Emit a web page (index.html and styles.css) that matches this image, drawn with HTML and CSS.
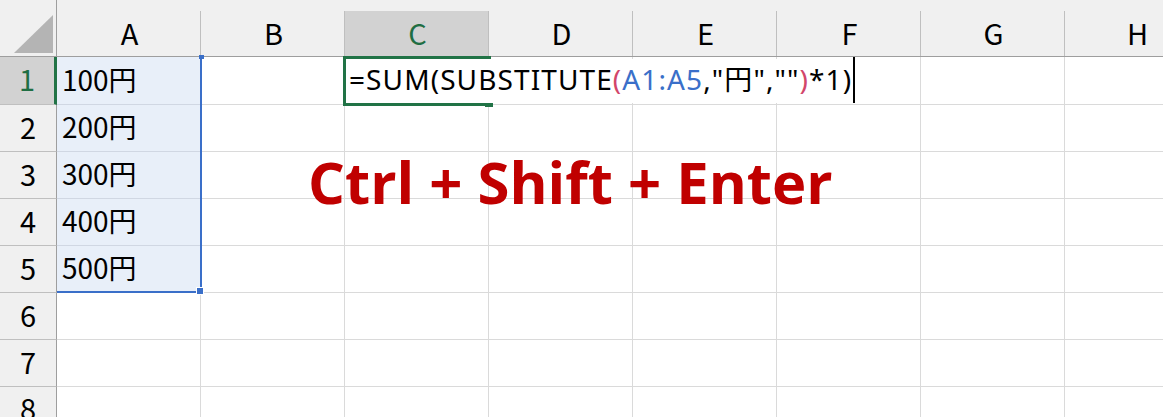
FILE: index.html
```html
<!DOCTYPE html>
<html lang="ja">
<head>
<meta charset="utf-8">
<link rel="stylesheet" href="styles.css">
</head>
<body>
<div class="sheet">
  <div class="row head">
    <div class="corner"><div class="tri"></div></div>
    <div class="ch">A</div>
    <div class="ch">B</div>
    <div class="ch active">C</div>
    <div class="ch">D</div>
    <div class="ch">E</div>
    <div class="ch">F</div>
    <div class="ch">G</div>
    <div class="ch">H</div>
  </div>
  <div class="row first">
    <div class="rh active">1</div>
    <div class="c sel">100円</div><div class="c"></div><div class="c"></div><div class="c"></div><div class="c"></div><div class="c"></div><div class="c"></div><div class="c"></div>
  </div>
  <div class="row">
    <div class="rh">2</div>
    <div class="c sel">200円</div><div class="c"></div><div class="c"></div><div class="c"></div><div class="c"></div><div class="c"></div><div class="c"></div><div class="c"></div>
  </div>
  <div class="row">
    <div class="rh">3</div>
    <div class="c sel">300円</div><div class="c"></div><div class="c"></div><div class="c"></div><div class="c"></div><div class="c"></div><div class="c"></div><div class="c"></div>
  </div>
  <div class="row">
    <div class="rh">4</div>
    <div class="c sel">400円</div><div class="c"></div><div class="c"></div><div class="c"></div><div class="c"></div><div class="c"></div><div class="c"></div><div class="c"></div>
  </div>
  <div class="row">
    <div class="rh">5</div>
    <div class="c sel">500円</div><div class="c"></div><div class="c"></div><div class="c"></div><div class="c"></div><div class="c"></div><div class="c"></div><div class="c"></div>
  </div>
  <div class="row">
    <div class="rh">6</div>
    <div class="c"></div><div class="c"></div><div class="c"></div><div class="c"></div><div class="c"></div><div class="c"></div><div class="c"></div><div class="c"></div>
  </div>
  <div class="row">
    <div class="rh">7</div>
    <div class="c"></div><div class="c"></div><div class="c"></div><div class="c"></div><div class="c"></div><div class="c"></div><div class="c"></div><div class="c"></div>
  </div>
  <div class="row last">
    <div class="rh">8</div>
    <div class="c"></div><div class="c"></div><div class="c"></div><div class="c"></div><div class="c"></div><div class="c"></div><div class="c"></div><div class="c"></div>
  </div>

  <div class="range"><span class="h1"></span><span class="h2"></span></div>
  <div class="activecell"><span class="fill"></span></div>
  <div class="formula">=SUM(SUBSTITUTE<span class="pr">(</span><span class="ref">A1:A5</span>,"円",""<span class="pr">)</span>*1)<span class="caret"></span></div>
  <div class="note">Ctrl + Shift + Enter</div>
</div>
</body>
</html>
```

FILE: styles.css
```css
html, body {
  margin: 0;
  padding: 0;
  background: #ffffff;
  overflow: hidden;
}
.sheet {
  position: relative;
  width: 1163px;
  height: 417px;
  overflow: hidden;
  font-family: "Noto Sans CJK JP", "Noto Sans", sans-serif;
  color: #000;
}
.row {
  display: flex;
  height: 47px;
}
.row.first { height: 48px; }
.row.head {
  height: 57px;
  background: #f0f0f0;
  box-sizing: border-box;
  border-bottom: 1px solid #9e9e9e;
  padding-top: 11px;
}
.corner {
  flex: 0 0 57px;
  box-sizing: border-box;
  border-right: 1px solid #9e9e9e;
  position: relative;
  margin-top: -11px;
}
.tri {
  position: absolute;
  left: 14px;
  top: 15px;
  width: 39px;
  height: 38px;
  background: #b4b4b4;
  clip-path: polygon(100% 0, 100% 100%, 0 100%);
}
.ch {
  flex: 0 0 144px;
  box-sizing: border-box;
  border-right: 1px solid #bfbfbf;
  display: flex;
  align-items: center;
  justify-content: center;
  font-size: 29px;
  line-height: 1;
  padding-left: 2px;
  padding-bottom: 2px;
}
.ch.active {
  background: #d2d2d2;
  color: #1f6e43;
}
.rh {
  flex: 0 0 57px;
  box-sizing: border-box;
  background: #f0f0f0;
  border-right: 1px solid #9e9e9e;
  border-bottom: 1px solid #bfbfbf;
  display: flex;
  align-items: center;
  justify-content: center;
  font-size: 29px;
  line-height: 1;
  padding-bottom: 4px;
}
.row.last .rh { padding-bottom: 0; align-items: flex-start; padding-top: 6px; }
.rh.active {
  background: #d2d2d2;
  color: #1f6e43;
  border-right: 3px solid #217346;
}
.c {
  flex: 0 0 144px;
  box-sizing: border-box;
  border-right: 1px solid #dadada;
  border-bottom: 1px solid #dadada;
  display: flex;
  align-items: center;
  padding-left: 5px;
  font-size: 28px;
  line-height: 1;
  padding-bottom: 4px;
}
.c.sel {
  background: #e8eff9;
  border-bottom-color: #d0d7e3;
}
.range {
  position: absolute;
  left: 57px;
  top: 57px;
  width: 145px;
  height: 236px;
  box-sizing: border-box;
  border-right: 2px solid #3a6fc9;
  border-bottom: 2px solid #3a6fc9;
}
.range .h1 {
  position: absolute;
  right: -4px;
  top: -2px;
  width: 5px;
  height: 4px;
  background: #3a6fc9;
}
.range .h2 {
  position: absolute;
  right: -4px;
  bottom: -4px;
  width: 6px;
  height: 6px;
  background: #3a6fc9;
  border: 1px solid #fff;
}
.activecell {
  position: absolute;
  left: 343px;
  top: 56px;
  width: 148px;
  height: 50px;
  box-sizing: border-box;
  border: 3px solid #217346;
  border-right: none;
}
.activecell .fill {
  position: absolute;
  right: -2px;
  bottom: -4px;
  width: 8px;
  height: 5px;
  background: #217346;
}
.formula {
  position: absolute;
  left: 347px;
  top: 59px;
  height: 44px;
  display: flex;
  align-items: center;
  font-family: "Noto Sans", "Noto Sans CJK JP", sans-serif;
  font-size: 28px;
  letter-spacing: 1.1px;
  line-height: 1;
  padding-bottom: 4px;
  box-sizing: border-box;
  background: #fff;
  padding-left: 2px;
  white-space: nowrap;
}
.formula .pr { color: #d2466a; }
.formula .ref { color: #3a6fc9; }
.caret {
  display: inline-block;
  width: 2px;
  height: 46px;
  background: #000;
  margin-left: 1px;
  margin-top: 2px;
  align-self: center;
}
.note {
  position: absolute;
  left: 308px;
  top: 153px;
  font-family: "Open Sans", "Noto Sans", sans-serif;
  font-weight: 700;
  font-size: 58px;
  line-height: 1;
  color: #c00000;
  white-space: nowrap;
}
```
